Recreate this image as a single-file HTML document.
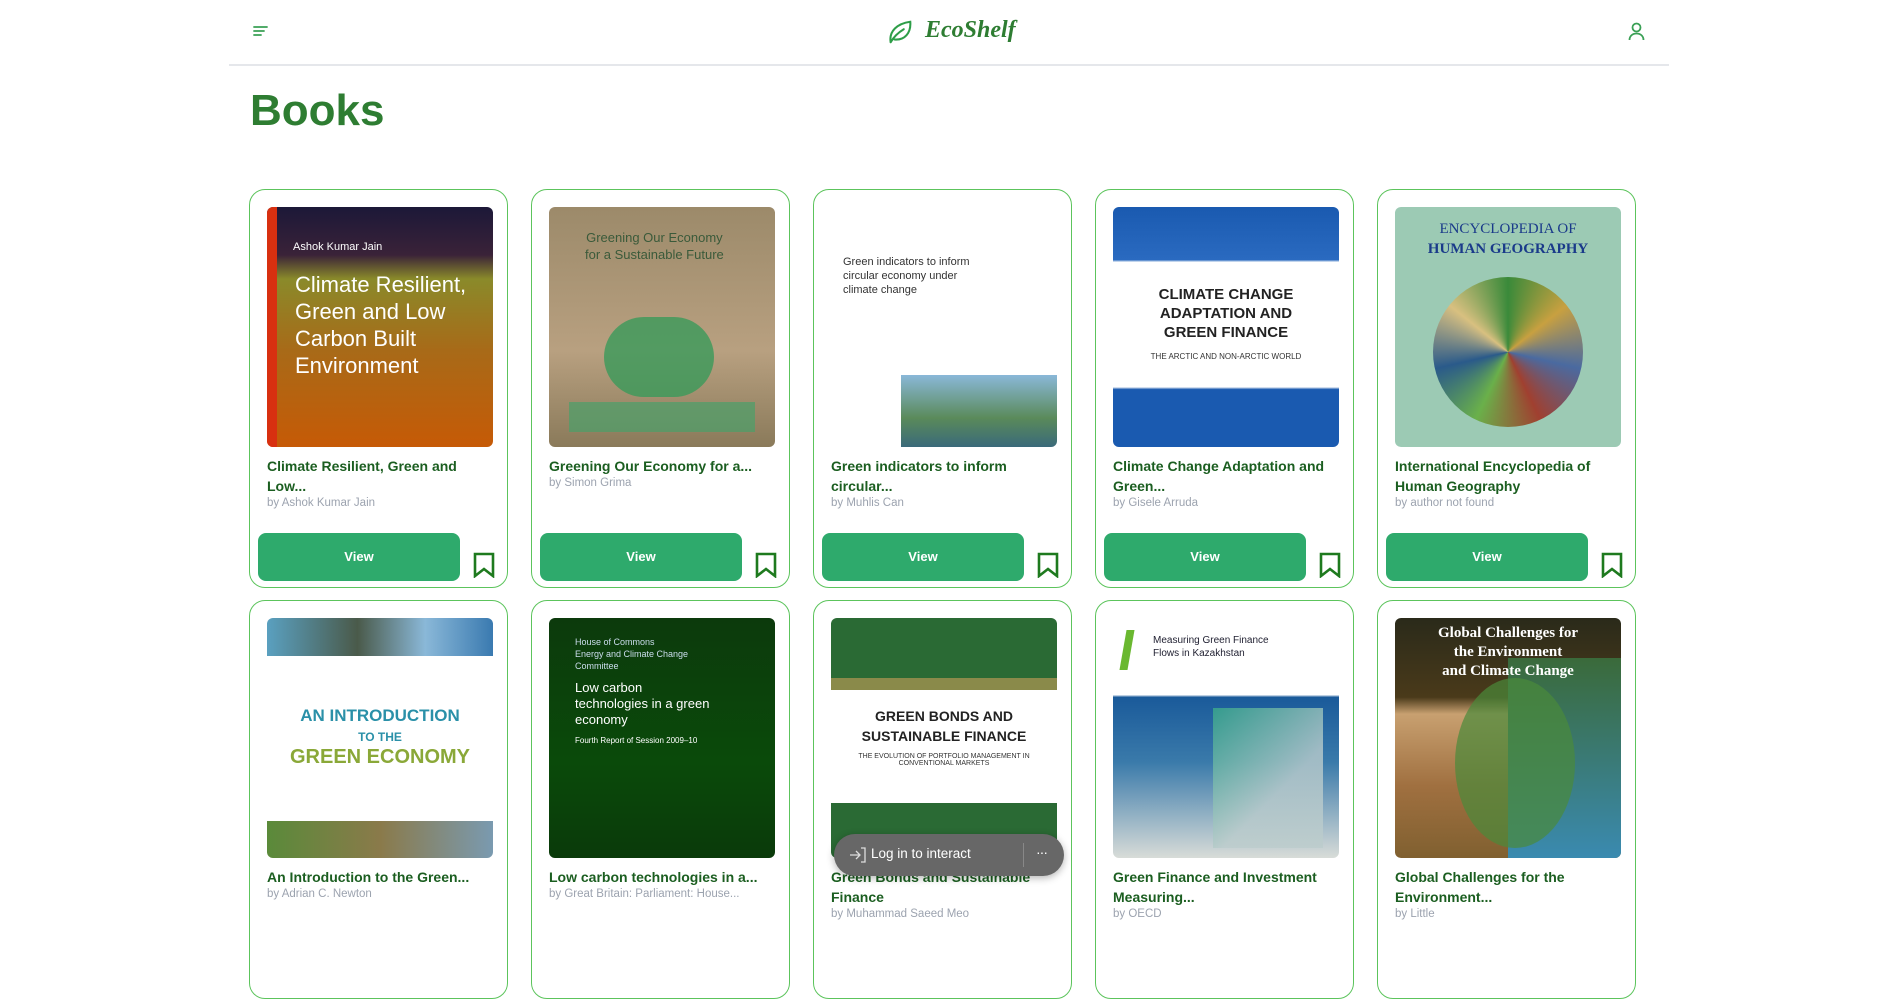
<!DOCTYPE html>
<html><head><meta charset="utf-8"><style>
*{box-sizing:border-box;margin:0;padding:0}
body{width:1896px;height:910px;overflow:hidden;background:#fff;font-family:"Liberation Sans",sans-serif;position:relative}
.hdr{position:absolute;left:229px;width:1440px;top:64px;border-top:2px solid #e5e7eb}
h1{position:absolute;left:250px;top:86px;font-size:44px;font-weight:bold;color:#2e7d32;letter-spacing:0}
.card{position:absolute;width:259px;height:399px;border:1.5px solid #5cc45c;border-radius:16px;background:#fff;overflow:hidden}
.cov{position:absolute;left:17px;top:17px;width:226px;height:240px;border-radius:6px;overflow:hidden}
.t{position:absolute;left:17px;top:266px;width:228px;font-size:14px;line-height:20px;font-weight:bold;color:#1b5e20}
.a{position:absolute;left:17px;font-size:11.5px;color:#9ca3af}
.btn{position:absolute;left:8px;top:343px;width:202px;height:48px;background:#2eaa6c;border-radius:8px;color:#fff;font-weight:bold;font-size:13px;text-align:center;line-height:48px}
.bm{position:absolute;left:223px;top:362px}
.ct{position:absolute;color:#fff;font-family:"Liberation Sans Narrow","Liberation Sans",sans-serif}
</style></head><body>
<svg style="position:absolute;left:253px;top:25px" width="16" height="12" viewBox="0 0 16 12"><path d="M1 2h13M1 6h10M1 10h7" stroke="#3aa055" stroke-width="1.8" stroke-linecap="round"/></svg>
<svg style="position:absolute;left:886px;top:18px" width="28" height="28" viewBox="0 0 30 30"><path d="M5 26C3 14 12 6 26 4c1 12-6 20-17 19M5 26c4-7 9-11 14-14" fill="none" stroke="#2e9e48" stroke-width="2.2" stroke-linecap="round"/></svg>
<div style="position:absolute;left:925px;top:17px;font-family:'Liberation Serif',serif;font-style:italic;font-weight:bold;font-size:24px;color:#2e7d32">EcoShelf</div>
<svg style="position:absolute;left:1628px;top:22px" width="17" height="19" viewBox="0 0 17 19"><circle cx="8.5" cy="5.5" r="4" fill="none" stroke="#3aa055" stroke-width="1.8"/><path d="M1.5 18c0-4 3-6.5 7-6.5s7 2.5 7 6.5" fill="none" stroke="#3aa055" stroke-width="1.8"/></svg>
<div class="hdr"></div>
<h1>Books</h1>

<div class="card" style="left:249px;top:189px">
 <div class="cov" style="background:linear-gradient(180deg,#1c1838 0%,#3a2238 20%,#8a8a2a 30%,#a86a18 60%,#c65a06 100%)"><div style="position:absolute;left:0;top:0;width:10px;height:240px;background:#d83010"></div><div class="ct" style="left:26px;top:34px;font-size:11px">Ashok Kumar Jain</div><div class="ct" style="left:28px;top:64px;font-size:22px;line-height:27px">Climate Resilient,<br>Green and Low<br>Carbon Built<br>Environment</div></div>
 <div class="t">Climate Resilient, Green and Low...</div><div class="a" style="top:307px">by Ashok Kumar Jain</div>
 <div class="btn">View</div><svg class="bm" width="22" height="26" viewBox="0 0 22 26"><path d="M2 2h18v22l-9-7-9 7z" fill="none" stroke="#1e7a1e" stroke-width="2.6"/></svg>
</div>
<div class="card" style="left:531px;top:189px">
 <div class="cov" style="background:linear-gradient(180deg,#9c8a6a,#b8a080 60%,#8a7a5a)"><div class="ct" style="left:36px;top:22px;font-size:13px;color:#3a5a3a;text-align:center;line-height:17px">Greening Our Economy<br>for a Sustainable Future</div><div style="position:absolute;left:55px;top:110px;width:110px;height:80px;border-radius:40px;background:#3a9a5a;opacity:.8"></div><div style="position:absolute;left:20px;top:195px;width:186px;height:30px;background:#4aa06a;opacity:.7"></div></div>
 <div class="t">Greening Our Economy for a...</div><div class="a" style="top:287px">by Simon Grima</div>
 <div class="btn">View</div><svg class="bm" width="22" height="26" viewBox="0 0 22 26"><path d="M2 2h18v22l-9-7-9 7z" fill="none" stroke="#1e7a1e" stroke-width="2.6"/></svg>
</div>
<div class="card" style="left:813px;top:189px">
 <div class="cov" style="background:#fff"><div class="ct" style="left:12px;top:48px;font-size:11px;color:#333;line-height:14px">Green indicators to inform<br>circular economy under<br>climate change</div><div style="position:absolute;left:70px;top:168px;width:156px;height:72px;background:linear-gradient(180deg,#8ab8d8,#5a8a5a 60%,#3a6a7a)"></div></div>
 <div class="t">Green indicators to inform circular...</div><div class="a" style="top:307px">by Muhlis Can</div>
 <div class="btn">View</div><svg class="bm" width="22" height="26" viewBox="0 0 22 26"><path d="M2 2h18v22l-9-7-9 7z" fill="none" stroke="#1e7a1e" stroke-width="2.6"/></svg>
</div>
<div class="card" style="left:1095px;top:189px">
 <div class="cov" style="background:linear-gradient(180deg,#1a5ab0 0%,#2a6ac0 22%,#fff 23%,#fff 75%,#1a5ab0 76%)"><div class="ct" style="left:0;width:226px;top:78px;font-size:15px;color:#222;text-align:center;font-weight:bold;line-height:19px">CLIMATE CHANGE<br>ADAPTATION AND<br>GREEN FINANCE</div><div class="ct" style="left:0;width:226px;top:145px;font-size:8px;color:#333;text-align:center">THE ARCTIC AND NON-ARCTIC WORLD</div></div>
 <div class="t">Climate Change Adaptation and Green...</div><div class="a" style="top:307px">by Gisele Arruda</div>
 <div class="btn">View</div><svg class="bm" width="22" height="26" viewBox="0 0 22 26"><path d="M2 2h18v22l-9-7-9 7z" fill="none" stroke="#1e7a1e" stroke-width="2.6"/></svg>
</div>
<div class="card" style="left:1377px;top:189px">
 <div class="cov" style="background:#9ccab4"><div class="ct" style="left:0;width:226px;top:12px;font-family:'Liberation Serif',serif;font-size:15px;color:#1a3a8a;text-align:center;line-height:20px">ENCYCLOPEDIA OF<br><b>HUMAN GEOGRAPHY</b></div><div style="position:absolute;left:38px;top:70px;width:150px;height:150px;border-radius:50%;background:conic-gradient(#3a8a3a,#c8a040,#4a6aa0,#a04030,#6ab04a,#2a5a8a,#d8c080,#3a8a3a)"></div></div>
 <div class="t">International Encyclopedia of Human Geography</div><div class="a" style="top:307px">by author not found</div>
 <div class="btn">View</div><svg class="bm" width="22" height="26" viewBox="0 0 22 26"><path d="M2 2h18v22l-9-7-9 7z" fill="none" stroke="#1e7a1e" stroke-width="2.6"/></svg>
</div>

<div class="card" style="left:249px;top:600px">
 <div class="cov" style="background:#fff"><div style="position:absolute;left:0;top:0;width:226px;height:38px;background:linear-gradient(90deg,#5aa0c0,#4a5a4a 40%,#8ab8d8 70%,#3a7ab0)"></div><div class="ct" style="left:0;width:226px;top:88px;font-size:17px;color:#2a90a8;text-align:center;font-weight:bold;line-height:20px">AN INTRODUCTION<br><span style="font-size:12px">TO THE</span><br><span style="color:#8aa838;font-size:20px">GREEN ECONOMY</span></div><div style="position:absolute;left:0;top:203px;width:226px;height:37px;background:linear-gradient(90deg,#5a8a3a,#8a7a4a 50%,#7a9ab0)"></div></div>
 <div class="t">An Introduction to the Green...</div><div class="a" style="top:287px">by Adrian C. Newton</div>
</div>
<div class="card" style="left:531px;top:600px">
 <div class="cov" style="background:linear-gradient(180deg,#0c3a0c,#0a4a0a 60%,#0a3a0a)"><div class="ct" style="left:26px;top:18px;font-size:9px;line-height:12px;color:#cde">House of Commons<br>Energy and Climate Change<br>Committee</div><div class="ct" style="left:26px;top:62px;font-size:13px;line-height:16px">Low carbon<br>technologies in a green<br>economy</div><div class="ct" style="left:26px;top:118px;font-size:8px">Fourth Report of Session 2009–10</div></div>
 <div class="t">Low carbon technologies in a...</div><div class="a" style="top:287px">by Great Britain: Parliament: House...</div>
</div>
<div class="card" style="left:813px;top:600px">
 <div class="cov" style="background:linear-gradient(180deg,#2a6a34 0%,#2a6a34 25%,#8a8a4a 25%,#8a8a4a 30%,#fff 30%,#fff 77%,#2a6a34 77%)"><div class="ct" style="left:0;width:226px;top:88px;font-size:14px;color:#222;text-align:center;font-weight:bold;line-height:20px">GREEN BONDS AND<br>SUSTAINABLE FINANCE</div><div class="ct" style="left:0;width:226px;top:135px;font-size:7px;color:#333;text-align:center">THE EVOLUTION OF PORTFOLIO MANAGEMENT IN<br>CONVENTIONAL MARKETS</div></div>
 <div class="t">Green Bonds and Sustainable Finance</div><div class="a" style="top:307px">by Muhammad Saeed Meo</div>
</div>
<div class="card" style="left:1095px;top:600px">
 <div class="cov" style="background:linear-gradient(180deg,#fff 0%,#fff 32%,#1a5a9a 33%,#3a7aaa 60%,#d8dcd8 100%)"><div class="ct" style="left:40px;top:16px;font-size:10px;color:#223;line-height:13px">Measuring Green Finance<br>Flows in Kazakhstan</div><div style="position:absolute;left:10px;top:12px;width:8px;height:40px;background:#6ab830;transform:skewX(-10deg)"></div><div style="position:absolute;left:100px;top:90px;width:110px;height:140px;background:linear-gradient(135deg,#3aaa8a,#bcc 60%);opacity:.8"></div></div>
 <div class="t">Green Finance and Investment Measuring...</div><div class="a" style="top:307px">by OECD</div>
</div>
<div class="card" style="left:1377px;top:600px">
 <div class="cov" style="background:linear-gradient(180deg,#2a2a1a 0%,#4a3a1a 33%,#c8a070 40%,#a07040 70%,#806030 100%)"><div style="position:absolute;left:113px;top:40px;width:113px;height:200px;background:linear-gradient(180deg,#3a6a3a,#3a8ab0)"></div><div style="position:absolute;left:60px;top:60px;width:120px;height:170px;border-radius:50%;background:#4a8a3a;opacity:.7"></div><div class="ct" style="left:0;width:226px;top:6px;font-family:'Liberation Serif',serif;font-size:15px;font-weight:bold;text-align:center;line-height:19px">Global Challenges for<br>the Environment<br>and Climate Change</div></div>
 <div class="t">Global Challenges for the Environment...</div><div class="a" style="top:307px">by Little</div>
</div>

<div style="position:absolute;left:834px;top:834px;width:230px;height:42px;border-radius:21px;background:#676767;box-shadow:0 2px 8px rgba(0,0,0,.3);color:#fff;font-size:13.5px">
 <svg style="position:absolute;left:15px;top:13px" width="18" height="16" viewBox="0 0 18 16"><path d="M1 8h10M7 4l4 4-4 4M12 1h4v14h-4" fill="none" stroke="#ddd" stroke-width="1.3"/></svg>
 <span style="position:absolute;left:37px;top:12px">Log in to interact</span>
 <div style="position:absolute;left:189px;top:9px;width:1px;height:24px;background:#888"></div>
 <span style="position:absolute;left:202px;top:10px;font-size:14px;letter-spacing:-1px">···</span>
</div>
</body></html>
